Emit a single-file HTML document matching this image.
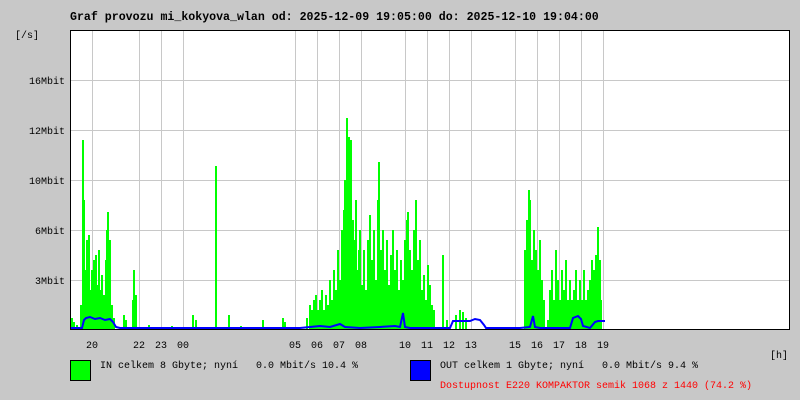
<!DOCTYPE html>
<html><head><meta charset="utf-8"><style>
html,body{margin:0;padding:0}
body{width:800px;height:400px;background:#c8c8c8;position:relative;overflow:hidden;font-family:"Liberation Mono","DejaVu Sans Mono",monospace;font-size:10px;color:#000}
.t{position:absolute;white-space:pre}
</style></head><body>
<div class="t" style="left:70px;top:11px;font-weight:bold;font-size:11.6px">Graf provozu mi_kokyova_wlan od: 2025-12-09 19:05:00 do: 2025-12-10 19:04:00</div>
<div class="t" style="left:15px;top:31px">[/s]</div>
<div class="t" style="left:29px;top:77px">16Mbit</div>
<div class="t" style="left:29px;top:127px">12Mbit</div>
<div class="t" style="left:29px;top:177px">10Mbit</div>
<div class="t" style="left:35px;top:227px">6Mbit</div>
<div class="t" style="left:35px;top:277px">3Mbit</div>
<svg style="position:absolute;left:0;top:0" width="800" height="400">
<rect x="70.5" y="30.5" width="719" height="299" fill="#fff"/>
<g stroke="#c8c8c8" stroke-width="1" shape-rendering="crispEdges">
<path d="M92.5 31V330M139.5 31V330M161.5 31V330M183.5 31V330M295.5 31V330M317.5 31V330M339.5 31V330M361.5 31V330M405.5 31V330M427.5 31V330M449.5 31V330M471.5 31V330M515.5 31V330M537.5 31V330M559.5 31V330M581.5 31V330M603.5 31V330"/>
<path d="M71 80.5H790M71 130.5H790M71 180.5H790M71 230.5H790M71 280.5H790"/>
</g>
<g stroke="#00ff00" stroke-width="2" fill="none">
<path d="M72 330V318M74 330V322M77 330V325M81 330V305M83 330V140M84 330V200M86 330V270M87 330V240M88 330V280M89 330V235M91 330V290M92 330V270M94 330V260M95 330V300M96 330V255M98 330V285M99 330V250M101 330V290M102 330V275M104 330V295M106 330V260M107 330V230M108 330V212M109 330V250M110 330V240M112 330V305M114 330V318M124 330V315M126 330V320M133 330V300M134 330V270M136 330V295M149 330V325M172 330V326M193 330V315M196 330V320M216 330V166M229 330V315M241 330V326M263 330V320M283 330V318M285 330V322M307 330V318M310 330V305M312 330V310M314 330V300M316 330V295M318 330V310M320 330V300M322 330V290M324 330V310M326 330V295M328 330V305M330 330V280M332 330V300M334 330V270M336 330V290M338 330V250M340 330V280M342 330V230M344 330V210M345 330V180M347 330V118M348 330V200M349 330V137M350 330V260M351 330V140M353 330V220M354 330V240M356 330V200M357 330V270M359 330V250M360 330V230M362 330V285M364 330V250M366 330V290M368 330V240M370 330V215M372 330V260M374 330V230M376 330V280M378 330V200M379 330V162M381 330V250M383 330V230M385 330V270M387 330V240M389 330V285M391 330V255M393 330V230M395 330V270M397 330V250M399 330V290M401 330V260M403 330V280M405 330V240M407 330V220M408 330V212M410 330V250M412 330V270M414 330V230M416 330V200M418 330V260M420 330V240M422 330V290M424 330V275M426 330V300M428 330V265M430 330V285M432 330V305M434 330V310M443 330V255M447 330V320M456 330V315M460 330V310M463 330V312M466 330V318M525 330V250M527 330V220M529 330V190M530 330V200M532 330V260M534 330V230M536 330V250M538 330V270M540 330V240M542 330V280M544 330V300M548 330V320M550 330V290M552 330V270M554 330V300M556 330V250M558 330V280M560 330V300M562 330V270M564 330V290M566 330V260M568 330V300M570 330V280M572 330V300M574 330V290M576 330V270M578 330V300M580 330V280M582 330V300M584 330V270M586 330V300M588 330V290M590 330V280M592 330V260M594 330V270M596 330V255M598 330V227M600 330V260M601 330V300"/>
</g>
<polyline fill="none" stroke="#0000ff" stroke-width="2" points="71,328 82,328 84,320 86,318 90,317 95,319 100,318 105,320 110,319 113,322 116,327 120,328 300,328 310,327 320,326 330,327 340,324 345,327 360,328 380,327 395,326 400,327 403,313 405,327 410,328 450,328 453,321 470,321 475,319 480,320 484,325 486,328 520,328 530,327 533,316 535,327 540,328 570,328 573,318 578,316 581,319 583,326 590,328 595,322 598,321 603,321 605,321"/>
<rect x="70.5" y="30.5" width="719" height="299" fill="none" stroke="#000" stroke-width="1" shape-rendering="crispEdges"/>
<rect x="70.5" y="360.5" width="20" height="20" fill="#00ff00" stroke="#000"/>
<rect x="410.5" y="360.5" width="20" height="20" fill="#0000ff" stroke="#000"/>
</svg>
<div class="t" style="left:86px;top:341px">20</div>
<div class="t" style="left:133px;top:341px">22</div>
<div class="t" style="left:155px;top:341px">23</div>
<div class="t" style="left:177px;top:341px">00</div>
<div class="t" style="left:289px;top:341px">05</div>
<div class="t" style="left:311px;top:341px">06</div>
<div class="t" style="left:333px;top:341px">07</div>
<div class="t" style="left:355px;top:341px">08</div>
<div class="t" style="left:399px;top:341px">10</div>
<div class="t" style="left:421px;top:341px">11</div>
<div class="t" style="left:443px;top:341px">12</div>
<div class="t" style="left:465px;top:341px">13</div>
<div class="t" style="left:509px;top:341px">15</div>
<div class="t" style="left:531px;top:341px">16</div>
<div class="t" style="left:553px;top:341px">17</div>
<div class="t" style="left:575px;top:341px">18</div>
<div class="t" style="left:597px;top:341px">19</div>
<div class="t" style="left:770px;top:351px">[h]</div>
<div class="t" style="left:100px;top:361px">IN celkem 8 Gbyte; nyní   0.0 Mbit/s 10.4 %</div>
<div class="t" style="left:440px;top:361px">OUT celkem 1 Gbyte; nyní   0.0 Mbit/s 9.4 %</div>
<div class="t" style="left:440px;top:381px;color:#ff0000">Dostupnost E220 KOMPAKTOR semik 1068 z 1440 (74.2 %)</div>
</body></html>
